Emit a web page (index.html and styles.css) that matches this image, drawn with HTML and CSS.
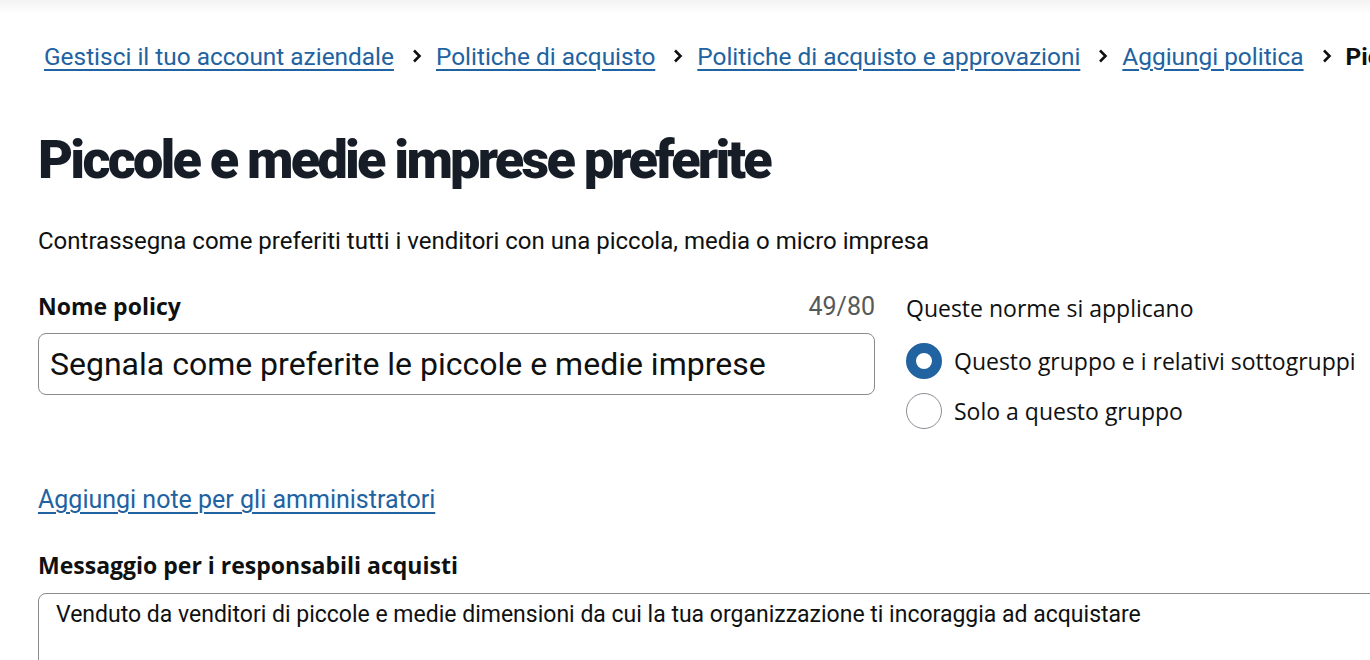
FILE: index.html
```html
<!DOCTYPE html>
<html lang="it">
<head>
<meta charset="utf-8">
<title>Piccole e medie imprese preferite</title>
<link rel="stylesheet" href="styles.css">
</head>
<body>
<div class="topshade"></div>
<main class="page">
  <nav class="crumbs">
    <a class="crumb" href="#">Gestisci il tuo account aziendale</a>
    <span class="sep"><svg width="12" height="16" viewBox="0 0 12 16"><path d="M3 2.5 L8.5 8 L3 13.5" fill="none" stroke="#0f1111" stroke-width="2.6"/></svg></span>
    <a class="crumb" href="#">Politiche di acquisto</a>
    <span class="sep"><svg width="12" height="16" viewBox="0 0 12 16"><path d="M3 2.5 L8.5 8 L3 13.5" fill="none" stroke="#0f1111" stroke-width="2.6"/></svg></span>
    <a class="crumb" href="#">Politiche di acquisto e approvazioni</a>
    <span class="sep"><svg width="12" height="16" viewBox="0 0 12 16"><path d="M3 2.5 L8.5 8 L3 13.5" fill="none" stroke="#0f1111" stroke-width="2.6"/></svg></span>
    <a class="crumb" href="#">Aggiungi politica</a>
    <span class="sep"><svg width="12" height="16" viewBox="0 0 12 16"><path d="M3 2.5 L8.5 8 L3 13.5" fill="none" stroke="#0f1111" stroke-width="2.6"/></svg></span>
    <span class="current">Piccole e medie imprese preferite</span>
  </nav>

  <h1 class="title">Piccole e medie imprese preferite</h1>
  <p class="desc">Contrassegna come preferiti tutti i venditori con una piccola, media o micro impresa</p>

  <div class="formrow">
    <div class="leftcol">
      <div class="labelrow">
        <span class="label">Nome policy</span>
        <span class="count">49/80</span>
      </div>
      <div class="input">Segnala come preferite le piccole e medie imprese</div>
    </div>
    <div class="rightcol">
      <div class="applies">Queste norme si applicano</div>
      <div class="radios">
        <div class="radio">
          <span class="dot on"></span>
          <span class="rlabel">Questo gruppo e i relativi sottogruppi</span>
        </div>
        <div class="radio">
          <span class="dot"></span>
          <span class="rlabel">Solo a questo gruppo</span>
        </div>
      </div>
    </div>
  </div>

  <div class="notesrow"><a class="notes" href="#">Aggiungi note per gli amministratori</a></div>

  <div class="label msglabel">Messaggio per i responsabili acquisti</div>
  <div class="textarea">Venduto da venditori di piccole e medie dimensioni da cui la tua organizzazione ti incoraggia ad acquistare</div>
</main>
</body>
</html>
```
FILE: styles.css
```css
html, body {
  margin: 0;
  padding: 0;
  background: #ffffff;
  overflow: hidden;
}
body {
  width: 1370px;
  height: 660px;
  font-family: Roboto, "Liberation Sans", sans-serif;
  color: #0f1111;
}
.topshade {
  height: 14px;
  background: linear-gradient(#f3f3f3, #ffffff);
}
.page {
  padding-left: 38px;
  white-space: nowrap;
}
.crumbs {
  display: flex;
  align-items: center;
  padding-left: 6px;
  margin-top: 25px;
  height: 34px;
  font-size: 24.4px;
}
.crumb {
  color: #2162a1;
  text-decoration: underline;
  text-underline-offset: 4px;
  text-decoration-thickness: 2px;
}
.sep {
  display: flex;
  align-items: center;
  margin: 0 13px 0 17px;
}
.current {
  font-weight: 700;
  color: #0f1111;
}
.title {
  margin: 57px 0 0 0;
  font-family: Roboto, "Liberation Sans", sans-serif;
  font-weight: 900;
  font-size: 54px;
  letter-spacing: -2.8px;
  line-height: 60px;
  color: #161d26;
}
.desc {
  margin: 35px 0 0 0;
  font-size: 24px;
  line-height: 32px;
}
.formrow {
  display: flex;
  margin-top: 32px;
  gap: 31px;
}
.leftcol {
  width: 837px;
  flex: none;
}
.labelrow {
  display: flex;
  justify-content: space-between;
  align-items: baseline;
  height: 34px;
}
.label {
  font-family: "Open Sans", sans-serif;
  font-weight: 700;
  font-size: 23px;
  line-height: 34px;
  color: #0f1111;
}
.count {
  font-size: 25px;
  color: #565959;
}
.input {
  margin-top: 10px;
  height: 62px;
  box-sizing: border-box;
  border: 1px solid #888c8c;
  border-radius: 8px;
  padding: 0 11px;
  display: flex;
  align-items: center;
  font-size: 32px;
}
.rightcol {
  font-family: "Open Sans", sans-serif;
  font-size: 23px;
  padding-top: 2px;
}
.applies {
  height: 34px;
  line-height: 34px;
}
.radios {
  margin-top: 11px;
}
.radio {
  display: flex;
  align-items: center;
  gap: 12px;
  height: 50px;
}
.dot {
  width: 36px;
  height: 36px;
  box-sizing: border-box;
  border-radius: 50%;
  border: 1.5px solid #8c8c94;
  flex: none;
}
.dot.on {
  border: 10.5px solid #2162a1;
}
.notesrow {
  margin-top: 49px;
  height: 30px;
  line-height: 30px;
}
.notes {
  font-size: 25px;
  color: #2162a1;
  text-decoration: underline;
  text-underline-offset: 4px;
  text-decoration-thickness: 2px;
}
.msglabel {
  margin-top: 35px;
  height: 30px;
  line-height: 30px;
}
.textarea {
  margin-top: 13px;
  width: 1360px;
  height: 100px;
  box-sizing: border-box;
  border: 1px solid #888c8c;
  border-radius: 8px;
  padding: 6px 17px;
  font-size: 23px;
  line-height: 30px;
}
```
